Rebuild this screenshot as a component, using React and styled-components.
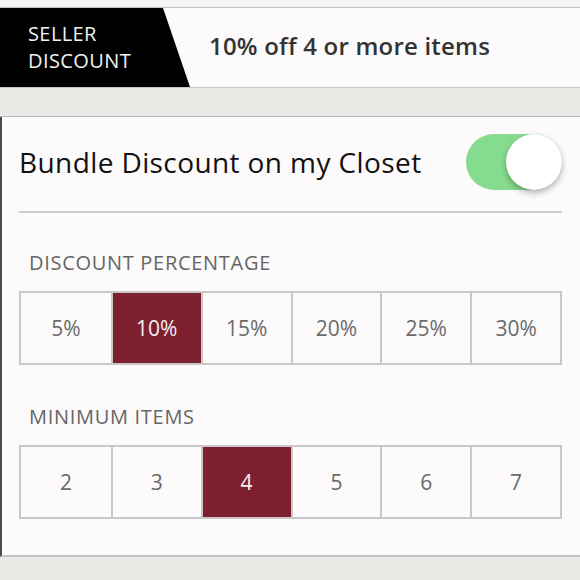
import styled, { createGlobalStyle } from 'styled-components';

const GlobalStyle = createGlobalStyle`
  html, body {
    margin: 0;
    padding: 0;
    background: #ebe9e5;
    font-family: "Open Sans", Lato, sans-serif;
  }
`;

const percentages = ['5%', '10%', '15%', '20%', '25%', '30%'];
const minimums = ['2', '3', '4', '5', '6', '7'];

function Segmented({ items, selected }) {
    return (
        <SegmentRow>
            {items.map((item) => (
                <Segment key={item} $active={item === selected}>{item}</Segment>
            ))}
        </SegmentRow>
    );
}

function App() {
    return (
        <Page>
            <GlobalStyle />
            <TopStrip />
            <Banner>
                <Badge>SELLER<br />DISCOUNT</Badge>
                <BannerText>10% off 4 or more items</BannerText>
            </Banner>
            <Spacer />
            <Panel>
                <ToggleRow>
                    <ToggleLabel>Bundle Discount on my Closet</ToggleLabel>
                    <Toggle $on>
                        <Knob />
                    </Toggle>
                </ToggleRow>
                <Divider />
                <SectionTitle>Discount Percentage</SectionTitle>
                <Segmented items={percentages} selected="10%" />
                <SectionTitle>Minimum Items</SectionTitle>
                <Segmented items={minimums} selected="4" />
            </Panel>
        </Page>
    );
}

export default App;

const Page = styled.div`
  width: 580px;
  height: 580px;
  overflow: hidden;
  display: flex;
  flex-direction: column;
  background: #ebe9e5;
`;

const TopStrip = styled.div`
  height: 7px;
  background: #f4f3f1;
  border-bottom: 1px solid #c4c2bf;
`;

const Banner = styled.div`
  height: 79px;
  display: flex;
  align-items: center;
  background: #fcfafa;
  border-bottom: 1px solid #c9c7c4;
`;

const Badge = styled.div`
  width: 190px;
  height: 100%;
  box-sizing: border-box;
  padding: 12px 0 0 28px;
  background: #000;
  clip-path: polygon(0 0, 163px 0, 190px 100%, 0 100%);
  color: #f2f2f2;
  font-size: 20px;
  line-height: 27px;
  letter-spacing: 0.4px;
`;

const BannerText = styled.div`
  margin-left: 19px;
  margin-top: -4px;
  color: #333;
  font-size: 24px;
  font-weight: 600;
  letter-spacing: 0.2px;
`;

const Spacer = styled.div`
  height: 28px;
  border-bottom: 1px solid #bdbbb8;
`;

const Panel = styled.div`
  height: 438px;
  background: #fcfafa;
  border-left: 2px solid #4a4a4a;
  border-bottom: 2px solid #c6c4c1;
  padding: 0 18px 0 17px;
  display: flex;
  flex-direction: column;
`;

const ToggleRow = styled.div`
  height: 94px;
  display: flex;
  align-items: center;
  justify-content: space-between;
`;

const ToggleLabel = styled.div`
  color: #111;
  font-size: 28px;
  letter-spacing: 0.4px;
  margin-top: -4px;
`;

const Toggle = styled.div`
  width: 96px;
  height: 56px;
  border-radius: 28px;
  background: ${(p) => (p.$on ? '#86dc8e' : '#ddd')};
  display: flex;
  align-items: center;
  justify-content: ${(p) => (p.$on ? 'flex-end' : 'flex-start')};
  margin-top: -4px;
`;

const Knob = styled.div`
  width: 56px;
  height: 56px;
  border-radius: 50%;
  background: #fff;
  box-shadow: 0 3px 6px rgba(0, 0, 0, 0.3);
`;

const Divider = styled.div`
  height: 2px;
  background: #cfcdcb;
`;

const SectionTitle = styled.div`
  text-transform: uppercase;
  color: #666;
  font-size: 20px;
  letter-spacing: 0.7px;
  padding: 38px 0 0 10px;
  height: 40px;
  line-height: 24px;
`;

const SegmentRow = styled.div`
  display: grid;
  grid-template-columns: repeat(6, 1fr);
  border: 2px solid #c8c8c8;
  height: 70px;
  margin-bottom: 2px;
`;

const Segment = styled.div`
  display: flex;
  align-items: center;
  justify-content: center;
  font-size: 21px;
  color: ${(p) => (p.$active ? '#f5f0f0' : '#6a6a6a')};
  background: ${(p) => (p.$active ? '#7c2030' : 'transparent')};
  & + & {
    border-left: 2px solid #c8c8c8;
  }
`;
